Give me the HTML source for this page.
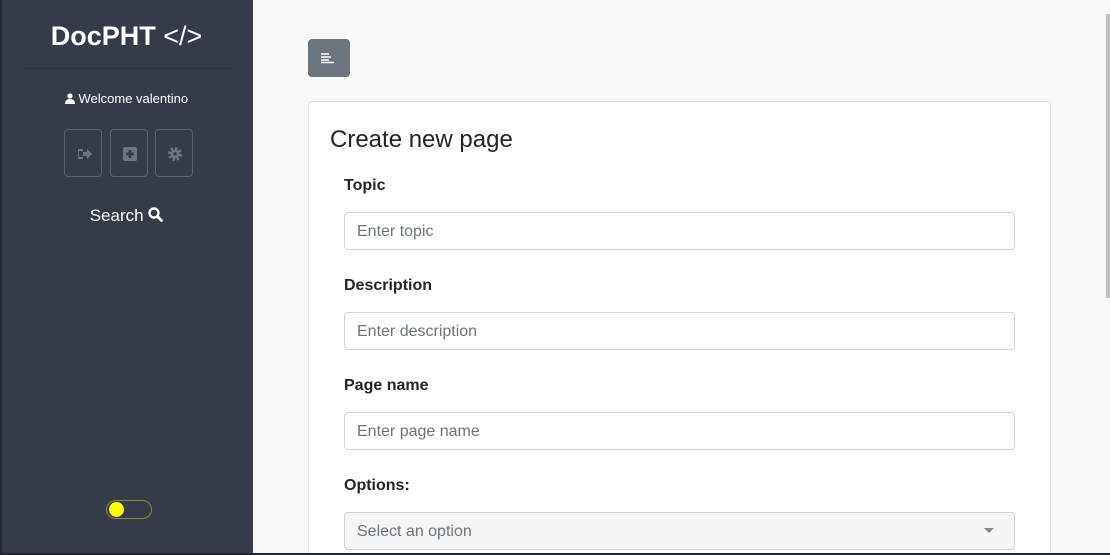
<!DOCTYPE html>
<html style="overflow:hidden;height:555px"><head><style>
*{box-sizing:border-box;margin:0;padding:0}
body{width:1110px;height:555px;overflow:hidden;background:#f8f8f8;font-family:"Liberation Sans",sans-serif;position:relative}
.side{position:absolute;left:0;top:0;width:253px;height:555px;background:#353b48}
.edge{position:absolute;left:0;top:0;width:2px;height:555px;background:#23272f}
.logo{position:absolute;left:0;width:253px;top:21px;text-align:center;color:#fff;font-size:27px;font-weight:bold}
.hr{position:absolute;left:23px;width:210px;top:68px;border-top:1px solid #2c313c}
.wel{position:absolute;left:0;width:253px;top:91px;text-align:center;color:#fff;font-size:13px}
.ib{position:absolute;top:129px;width:38px;height:48px;border:1px solid #5c626d;border-radius:4px}
.srch{position:absolute;left:0;width:253px;top:206px;text-align:center;color:#fff;font-size:17px}
.tog{position:absolute;left:106px;top:500px;width:46px;height:19px;border:1px solid #8d8a2a;border-radius:10px}
.tog i{position:absolute;left:2px;top:1px;width:15px;height:15px;border-radius:50%;background:#ffff00}
.btn{position:absolute;left:308px;top:39px;width:42px;height:38px;background:#6c747e;border-radius:4px}
.card{position:absolute;left:308px;top:101px;width:743px;height:460px;background:#fff;border:1px solid #e2e2e2;border-radius:4px}
h1{position:absolute;left:330px;top:126px;font-size:24px;font-weight:normal;color:#212529}
.lb{position:absolute;left:344px;font-size:16px;font-weight:bold;color:#212529}
.in{position:absolute;left:344px;width:671px;height:38px;border:1px solid #ced4da;border-radius:4px;padding:0 12px;line-height:38px;color:#6c757d;font-size:16px;background:#fff}
.sb{position:absolute;left:1106px;top:14px;width:4px;height:284px;background:#c1c1c1}
.bot{position:absolute;left:0;top:553px;width:1110px;height:2px;background:#23272f}
</style></head><body>
<div class="side">
<div class="logo">DocPHT <span style="font-weight:normal">&lt;/&gt;</span></div>
<div class="hr"></div>
<div class="wel"><svg width="10" height="11" viewBox="0 0 10 11" style="vertical-align:-1px"><circle cx="5" cy="3" r="2.6" fill="#fff"/><path d="M0 11 Q0 6 5 6 Q10 6 10 11Z" fill="#fff"/></svg> Welcome valentino</div>
<div class="ib" style="left:64px"><svg width="38" height="48" viewBox="0 0 38 48"><path d="M13 19h5v2h-4v6h4v2h-5zM18 22h4v-3l5 5-5 5v-3h-4z" fill="#6f7580"/></svg></div>
<div class="ib" style="left:110px"><svg width="38" height="48" viewBox="0 0 38 48"><rect x="12" y="17" width="14" height="14" rx="2" fill="#6f7580"/><path d="M17.5 20h3v2.5h2.5v3h-2.5V28h-3v-2.5H15v-3h2.5z" fill="#353b48"/></svg></div>
<div class="ib" style="left:155px"><svg width="38" height="48" viewBox="0 0 38 48"><circle cx="19" cy="24" r="5" fill="none" stroke="#6f7580" stroke-width="4" stroke-dasharray="2.2 1.7"/><circle cx="19" cy="24" r="4.5" fill="#6f7580"/><circle cx="19" cy="24" r="1.7" fill="#353b48"/></svg></div>
<div class="srch">Search <svg width="15" height="15" viewBox="0 0 15 15" style="vertical-align:-1px"><circle cx="6" cy="6" r="4.5" fill="none" stroke="#fff" stroke-width="2.4"/><path d="M9.5 9.5l4 4" stroke="#fff" stroke-width="2.8" stroke-linecap="round"/></svg></div>
<div class="tog"><i></i></div>
<div class="edge"></div>
</div>
<div class="btn"><svg width="42" height="38" viewBox="0 0 42 38"><path d="M13 15h8M13 18h10M13 21h8M13 23.5h13" stroke="#fff" stroke-width="1.6"/></svg></div>
<div class="card"></div>
<h1>Create new page</h1>
<div class="lb" style="top:177px">Topic</div>
<div class="in" style="top:212px">Enter topic</div>
<div class="lb" style="top:277px">Description</div>
<div class="in" style="top:312px">Enter description</div>
<div class="lb" style="top:377px">Page name</div>
<div class="in" style="top:412px">Enter page name</div>
<div class="lb" style="top:477px">Options:</div>
<div class="in" style="top:512px;background:#f5f5f5">Select an option<svg width="10" height="6" viewBox="0 0 10 6" style="position:absolute;right:20px;top:15px"><path d="M0 0h10L5 5z" fill="#888"/></svg></div>
<div class="sb"></div>
<div class="bot"></div>
</body></html>
